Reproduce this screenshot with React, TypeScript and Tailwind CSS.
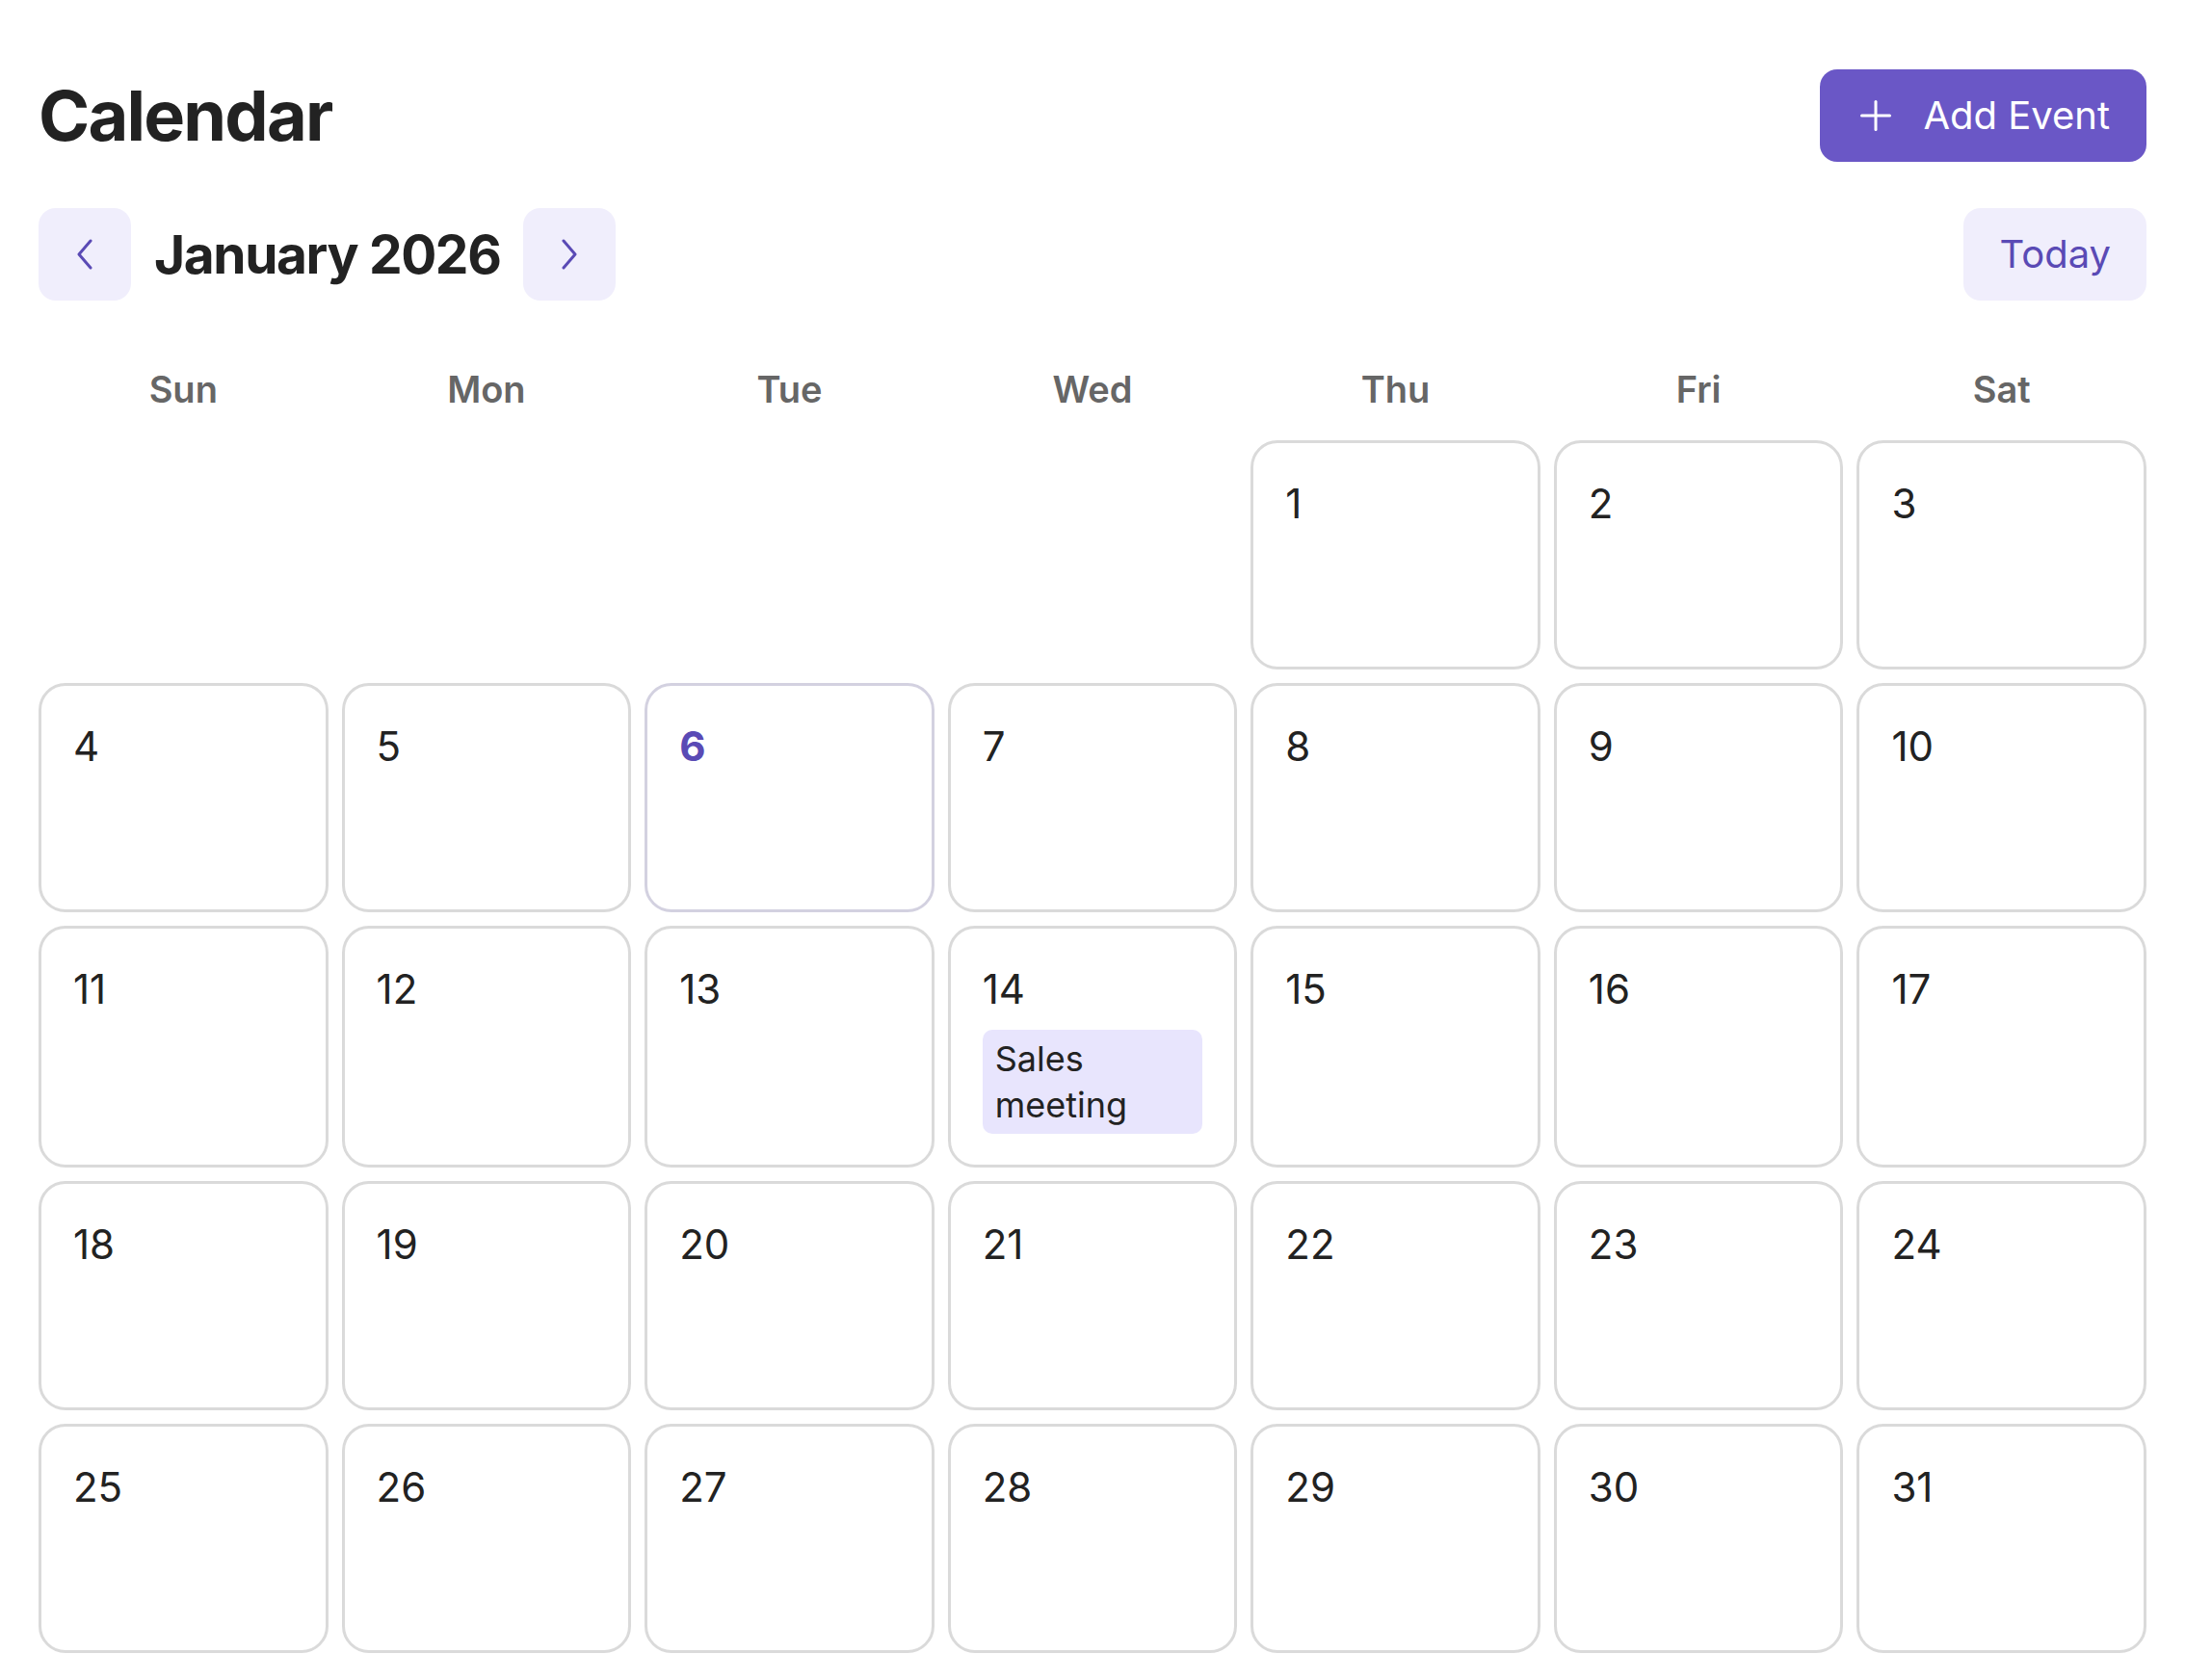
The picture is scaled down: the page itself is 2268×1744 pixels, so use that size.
import React from "react";

const WEEKDAYS = ["Sun", "Mon", "Tue", "Wed", "Thu", "Fri", "Sat"];

function Chevron({ dir }: { dir: "left" | "right" }) {
  return (
    <svg width="16" height="32" viewBox="0 0 16 32" fill="none" stroke="#5a4ab5" strokeWidth="3" strokeLinecap="round" strokeLinejoin="round">
      {dir === "left" ? <polyline points="14,2 2,16 14,30" /> : <polyline points="2,2 14,16 2,30" />}
    </svg>
  );
}

function PlusIcon() {
  return (
    <svg width="32" height="32" viewBox="0 0 32 32" fill="none" stroke="#ffffff" strokeWidth="3" strokeLinecap="round">
      <line x1="16" y1="1.5" x2="16" y2="30.5" />
      <line x1="1.5" y1="16" x2="30.5" y2="16" />
    </svg>
  );
}

export default function App() {
  const cells: (number | null)[] = [null, null, null, null];
  for (let d = 1; d <= 31; d++) cells.push(d);

  return (
    <div className="min-h-screen bg-white px-10 pt-[72px] pb-10 font-['Inter',sans-serif] text-[#222222]">
      <div className="flex items-center justify-between">
        <h1 className="text-[72px] font-bold leading-[80px] tracking-tight">Calendar</h1>
        <button className="flex h-24 items-center gap-[33px] rounded-[18px] bg-[#6a57c6] pl-[42px] pr-[38px] text-[40px] text-white">
          <PlusIcon />
          <span>Add Event</span>
        </button>
      </div>

      <div className="mt-12 flex items-center justify-between">
        <div className="flex items-center gap-6">
          <button className="flex h-24 w-24 items-center justify-center rounded-[18px] bg-[#f0eefc]">
            <Chevron dir="left" />
          </button>
          <h2 className="text-[55px] font-bold leading-[64px] tracking-tight">January 2026</h2>
          <button className="flex h-24 w-24 items-center justify-center rounded-[18px] bg-[#f0eefc]">
            <Chevron dir="right" />
          </button>
        </div>
        <button className="h-24 rounded-[18px] bg-[#f0eefc] px-[37px] text-[40px] text-[#5a4ab5]">Today</button>
      </div>

      <div className="mt-16 grid grid-cols-7 gap-x-[14px]">
        {WEEKDAYS.map((d) => (
          <div key={d} className="flex h-14 items-center justify-center text-[38px] font-semibold text-[#666666]">
            {d}
          </div>
        ))}
      </div>

      <div className="mt-[25px] grid grid-cols-7 gap-[14px]">
        {cells.map((d, i) =>
          d === null ? (
            <div key={"e" + i} className="min-h-[238px]" />
          ) : (
            <div
              key={d}
              className={
                d === 6
                  ? "min-h-[238px] rounded-[28px] border-[3px] border-[#d3d1e0] px-[33px] pt-[35px] pb-[32px]"
                  : "min-h-[238px] rounded-[28px] border-[3px] border-[#dadada] px-[33px] pt-[35px] pb-[32px]"
              }
            >
              <div
                className={
                  d === 6
                    ? "text-[42px] font-bold leading-[56px] text-[#5a4ab5]"
                    : "text-[42px] leading-[56px] text-[#222222]"
                }
              >
                {d}
              </div>
              {d === 14 && (
                <div className="mt-[14px] rounded-[10px] bg-[#e8e5fd] px-[13px] py-[6px] text-[36px] leading-[48px] text-[#222222]">
                  Sales meeting
                </div>
              )}
            </div>
          )
        )}
      </div>
    </div>
  );
}
